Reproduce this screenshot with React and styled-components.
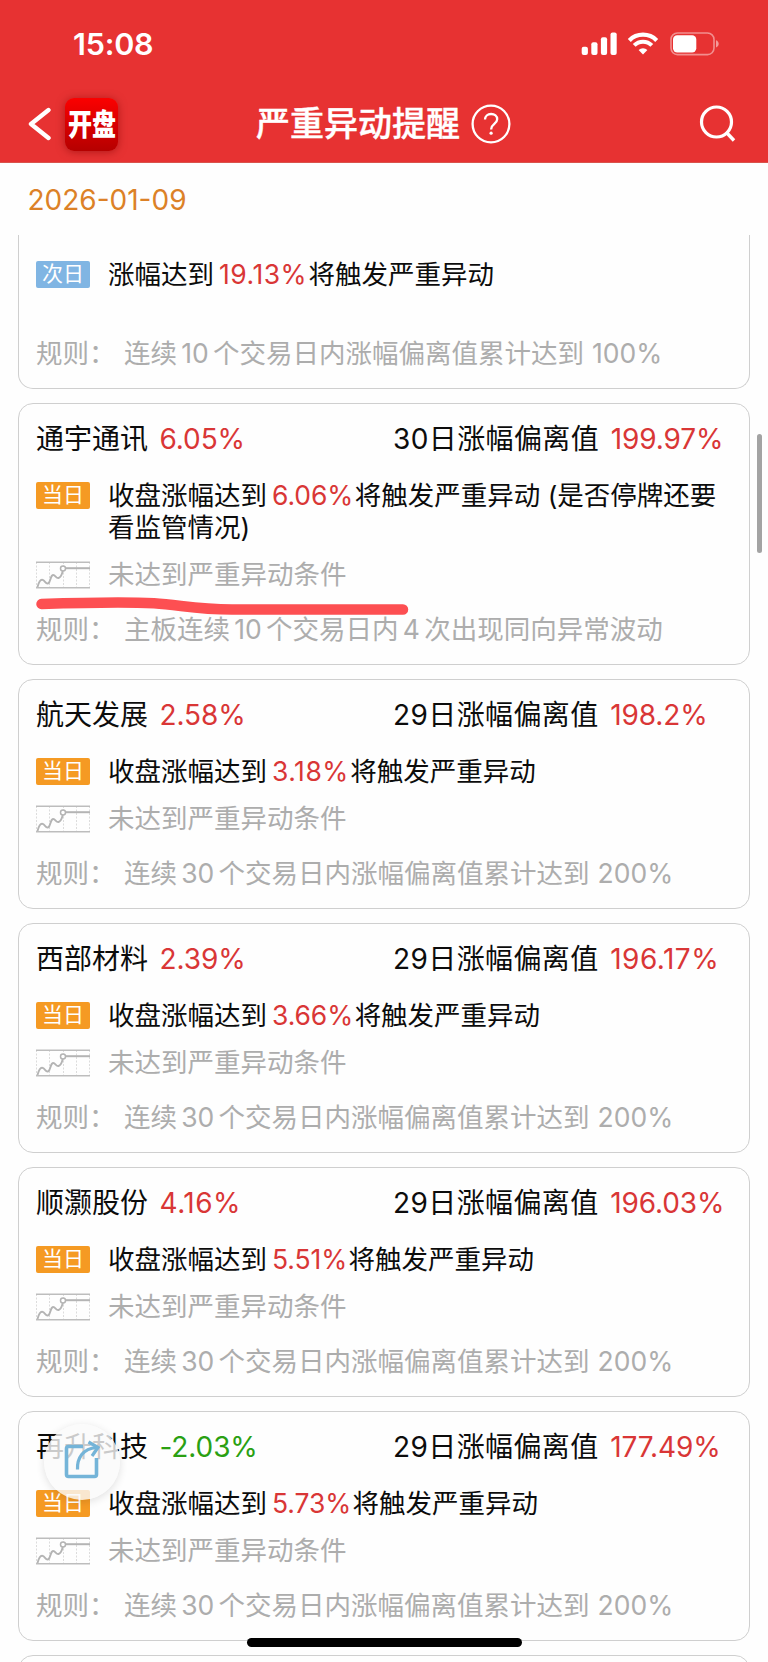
import React from 'react';
import styled, { createGlobalStyle } from 'styled-components';

const stocks = [
  {
    name: '通宇通讯',
    change: '6.05%',
    days: 30,
    deviation: '199.97%',
    target: '6.06%',
    note: ' (是否停牌还要看监管情况)',
    rule: '主板连续 10 个交易日内 4 次出现同向异常波动',
    marked: true,
  },
  {
    name: '航天发展',
    change: '2.58%',
    days: 29,
    deviation: '198.2%',
    target: '3.18%',
    rule: '连续 30 个交易日内涨幅偏离值累计达到',
    limit: '200%',
  },
  {
    name: '西部材料',
    change: '2.39%',
    days: 29,
    deviation: '196.17%',
    target: '3.66%',
    rule: '连续 30 个交易日内涨幅偏离值累计达到',
    limit: '200%',
  },
  {
    name: '顺灏股份',
    change: '4.16%',
    days: 29,
    deviation: '196.03%',
    target: '5.51%',
    rule: '连续 30 个交易日内涨幅偏离值累计达到',
    limit: '200%',
  },
  {
    name: '再升科技',
    change: '-2.03%',
    days: 29,
    deviation: '177.49%',
    target: '5.73%',
    rule: '连续 30 个交易日内涨幅偏离值累计达到',
    limit: '200%',
  },
];

const hasInnerOne = (text) => /.1\d/.test(text);

const StatusIcons = () => (
  <svg width="140" height="24" viewBox="0 0 140 24" fill="none">
    <g fill="#fff">
      <rect x="1.7" y="14.7" width="6.2" height="8.2" rx="2" />
      <rect x="11.3" y="10.2" width="6.2" height="12.7" rx="2" />
      <rect x="20.9" y="5.2" width="6.2" height="17.7" rx="2" />
      <rect x="30.5" y="0.4" width="6.2" height="22.5" rx="2" />
    </g>
    <path d="M49.3 8.4a19.3 19.3 0 0 1 27.4 0" stroke="#fff" strokeWidth="4.2" />
    <path d="M54.2 13.4a12.3 12.3 0 0 1 17.6 0" stroke="#fff" strokeWidth="4" />
    <path d="M58.6 17.9a6.5 6.5 0 0 1 8.8 0L63 22.6z" fill="#fff" />
    <rect x="91" y="1" width="43" height="21.6" rx="6.5" stroke="#fff" strokeOpacity="0.45" strokeWidth="1.6" />
    <rect x="93" y="3.2" width="23.3" height="17.2" rx="4.2" fill="#fff" />
    <path d="M136 8.3c3.6 1.2 3.6 6 0 7.2z" fill="#fff" fillOpacity="0.5" />
  </svg>
);

const BackIcon = () => (
  <svg width="24" height="34" viewBox="0 0 24 34" fill="none">
    <path d="M20.5 3 3 17l17.5 14" stroke="#fff" strokeWidth="4.4" strokeLinecap="round" strokeLinejoin="round" />
  </svg>
);

const HelpIcon = () => (
  <svg width="40" height="40" viewBox="0 0 40 40" fill="none" stroke="#fff">
    <circle cx="20" cy="20" r="18.4" strokeWidth="2.3" />
    <path
      d="M14 15.6c0-3.4 2.6-5.6 6.1-5.6 3.5 0 6.1 2.2 6.1 5.3 0 4.4-6 4.7-6 9.6v.7"
      strokeWidth="2.3"
    />
    <circle cx="20.1" cy="29.2" r="1.6" fill="#fff" stroke="none" />
  </svg>
);

const SearchIcon = () => (
  <svg width="38" height="38" viewBox="0 0 38 38" fill="none" stroke="#fff" strokeWidth="3.2">
    <circle cx="18.5" cy="17" r="15" />
    <path d="m28 27 8 8.5" strokeWidth="3.4" />
  </svg>
);

const TrendIcon = () => (
  <svg width="54" height="28" viewBox="0 0 54 28" fill="none">
    <path d="M.5 1v26M13.5 1v26M27.5 1v26M40.5 1v26M53.5 1v26" stroke="#dcdcdc" strokeDasharray="2 1.5" />
    <path d="M0 1.2h54M0 26.8h54" stroke="#bdbdbd" strokeWidth="1.4" />
    <path
      d="M1.5 26c1.3-5 3-8 5.2-7.2 2.4.9 3 4.6 5.5 3.6 2.7-1.3 2-8 4.8-8.400 2.500-.2 3 3.700 5.600 3 3-1 3.400-4.500 4.200-7"
      stroke="#b4b4b4"
      strokeWidth="1.9"
    />
    <path d="M29.5 7.2H54" stroke="#b4b4b4" strokeWidth="2" />
    <circle cx="27" cy="7.4" r="2.5" stroke="#b4b4b4" strokeWidth="1.5" fill="#fff" />
  </svg>
);

const ShareIcon = () => (
  <svg width="38" height="40" viewBox="0 0 38 40" fill="none" stroke="#74b4d8" strokeWidth="3.6">
    <path d="M21 6.500H6.500a2 2 0 0 0-2 2v26a2 2 0 0 0 2 2h26a2 2 0 0 0 2-2V18" />
    <path d="M15.500 29.500C15 18 21 8.500 34.500 7.500" strokeWidth="3.200" />
    <path d="m26.500 2 9.500 5.500-6 8.500" strokeWidth="3.200" />
  </svg>
);

const StockCard = ({ stock }) => (
  <Card>
    <CardHead>
      <StockName>
        {stock.name}
        <Rate $down={stock.change.startsWith('-')} $loose={hasInnerOne(stock.change)}>
          {stock.change}
        </Rate>
      </StockName>
      <Deviation>
        {stock.days}日涨幅偏离值
        <Rate $loose={hasInnerOne(stock.deviation)}>{stock.deviation}</Rate>
      </Deviation>
    </CardHead>
    <Row>
      <Tag>当日</Tag>
      <RowText>
        收盘涨幅达到
        <Target $loose={hasInnerOne(stock.target)}>{stock.target}</Target>
        将触发严重异动{stock.note}
      </RowText>
    </Row>
    <Row $muted>
      <TrendIcon />
      <RowText>未达到严重异动条件</RowText>
    </Row>
    <Rule>
      <RuleLabel>规则：</RuleLabel>
      {stock.rule}
      {stock.limit && <Limit>{stock.limit}</Limit>}
    </Rule>
    {stock.marked && (
      <Marker width="376" height="20" viewBox="0 0 376 20" fill="none">
        <path
          d="M5.500 8C50 6.500 90 5.800 118 7.200C145 9 160 13.300 196 13.500L367 13.500"
          stroke="#fd4f52"
          strokeWidth="10.500"
          strokeLinecap="round"
        />
      </Marker>
    )}
  </Card>
);

const App = () => {
  return (
    <Screen>
      <GlobalStyle />
      <Header>
        <StatusBar>
          <Clock>15:08</Clock>
          <StatusIcons />
        </StatusBar>
        <NavBar>
          <NavSide>
            <BackIcon />
            <AppBadge>
              <span>开盘</span>
            </AppBadge>
          </NavSide>
          <NavTitle>
            严重异动提醒
            <HelpIcon />
          </NavTitle>
          <NavSide $end>
            <SearchIcon />
          </NavSide>
        </NavBar>
      </Header>
      <DateBar>2026-01-09</DateBar>
      <List>
        <Card $cut>
          <Row $last>
            <Tag $next>次日</Tag>
            <RowText>
              涨幅达到<Target $loose>19.13%</Target>将触发严重异动
            </RowText>
          </Row>
          <Rule>
            <RuleLabel>规则：</RuleLabel>
            连续 10 个交易日内涨幅偏离值累计达到
            <Limit>100%</Limit>
          </Rule>
        </Card>
        {stocks.map((stock) => (
          <StockCard key={stock.name} stock={stock} />
        ))}
        <Card />
      </List>
      <ScrollThumb />
      <ShareButton>
        <ShareIcon />
      </ShareButton>
      <HomeIndicator />
    </Screen>
  );
};

export default App;

const GlobalStyle = createGlobalStyle`
  * {
    box-sizing: border-box;
  }
  body {
    margin: 0;
    background: #fff;
    font-family: Inter, 'Noto Sans CJK SC', sans-serif;
  }
  svg {
    display: block;
    flex-shrink: 0;
  }
`;

const Screen = styled.div`
  position: relative;
  display: flex;
  flex-direction: column;
  width: 768px;
  height: 1662px;
  overflow: hidden;
  background: #fefefe;
`;
const Header = styled.header`
  height: 163px;
  flex-shrink: 0;
  color: #fff;
  background: #e73232;
  border-bottom: 1px solid #d9534c;
`;
const StatusBar = styled.div`
  display: flex;
  align-items: center;
  justify-content: space-between;
  height: 87px;
  padding: 0 48px 0 73px;
`;
const Clock = styled.span`
  font-size: 30.5px;
  font-weight: 600;
  letter-spacing: -0.2px;
`;
const NavBar = styled.nav`
  display: grid;
  grid-template-columns: 1fr auto 1fr;
  align-items: center;
  height: 74px;
  padding: 0 32px 0 28px;
`;
const NavSide = styled.div`
  display: flex;
  align-items: center;
  justify-content: ${({ $end }) => ($end ? 'flex-end' : 'flex-start')};
  gap: 13px;
`;
const AppBadge = styled.div`
  display: flex;
  align-items: center;
  justify-content: center;
  width: 53px;
  height: 53px;
  border-radius: 9px;
  background: linear-gradient(#fb0000, #b50000);
  box-shadow: 0 1px 8px rgba(120, 0, 0, 0.5);

  span {
    font-size: 30px;
    font-weight: 900;
    line-height: 1;
    white-space: nowrap;
    transform: scaleX(0.8);
  }
`;
const NavTitle = styled.h1`
  display: flex;
  align-items: center;
  gap: 11px;
  margin: 0;
  padding-left: 3px;
  font-size: 34px;
  font-weight: 500;
  line-height: 40px;
  -webkit-text-stroke: 0.4px #fff;
`;
const DateBar = styled.div`
  height: 72px;
  flex-shrink: 0;
  padding-left: 27.5px;
  color: #dc8127;
  font-size: 28px;
  line-height: 75px;
`;
const List = styled.main`
  display: flex;
  flex: 1;
  flex-direction: column;
  gap: 14px;
  padding: 0 18px;
  overflow: hidden;
`;
const Card = styled.article`
  position: relative;
  flex-shrink: 0;
  min-height: ${({ $cut }) => ($cut ? '0' : '230px')};
  padding: ${({ $cut }) => ($cut ? '23px 17px 19px' : '0 17px 19px')};
  border: 1px solid #cfcfcf;
  border-top-width: ${({ $cut }) => ($cut ? '0' : '1px')};
  border-radius: ${({ $cut }) => ($cut ? '0 0 15px 15px' : '15px')};
`;
const CardHead = styled.div`
  display: grid;
  grid-template-columns: 357px 1fr;
  height: 75px;
  color: #0c0c0c;
  font-size: 28px;
  line-height: 70px;
  white-space: nowrap;
`;
const StockName = styled.div``;
const Deviation = styled.div`
  letter-spacing: 0.4px;
`;
const Rate = styled.span`
  margin-left: 11.5px;
  color: ${({ $down }) => ($down ? '#2aa012' : '#d93636')};
  letter-spacing: ${({ $loose }) => ($loose ? '0.5px' : '-0.1px')};
`;
const Row = styled.div`
  display: flex;
  gap: 18px;
  margin-bottom: ${({ $muted, $last }) => ($last ? '47px' : $muted ? '23px' : '15px')};
  color: ${({ $muted }) => ($muted ? '#adadad' : '#0c0c0c')};

  > svg {
    margin-top: 3px;
  }
`;
const RowText = styled.div`
  font-size: 26.5px;
  line-height: 32px;
`;
const Tag = styled.span`
  flex-shrink: 0;
  width: 54px;
  height: 27px;
  margin-top: 3px;
  border-radius: 2px;
  color: #fff;
  background: ${({ $next }) => ($next ? '#80b5e3' : '#f59a23')};
  font-size: 21px;
  line-height: 26px;
  text-align: center;
`;
const Target = styled.span`
  margin: 0 1.5px 0 5px;
  color: #d93636;
  letter-spacing: ${({ $loose }) => ($loose ? '0.5px' : '-0.1px')};
`;
const Rule = styled.div`
  display: flex;
  color: #adadad;
  font-size: 26.5px;
  line-height: 32px;
  white-space: pre;
  word-spacing: -3.2px;
`;
const RuleLabel = styled.span`
  width: 88px;
`;
const Limit = styled.span`
  margin-left: 8px;
`;
const Marker = styled.svg`
  position: absolute;
  left: 17px;
  bottom: 48px;
`;
const ScrollThumb = styled.div`
  position: absolute;
  top: 434px;
  right: 6px;
  width: 5px;
  height: 119px;
  border-radius: 3px;
  background: #a3a3a3;
`;
const ShareButton = styled.button`
  position: absolute;
  left: 44px;
  bottom: 162px;
  display: flex;
  align-items: center;
  justify-content: center;
  width: 76px;
  height: 76px;
  padding: 0 2px 5px 0;
  border: 0;
  border-radius: 50%;
  background: rgba(250, 250, 250, 0.8);
  box-shadow: 0 2px 8px rgba(0, 0, 0, 0.12);
`;
const HomeIndicator = styled.div`
  position: absolute;
  left: 247px;
  bottom: 15px;
  width: 275px;
  height: 9px;
  border-radius: 5px;
  background: #000;
`;
